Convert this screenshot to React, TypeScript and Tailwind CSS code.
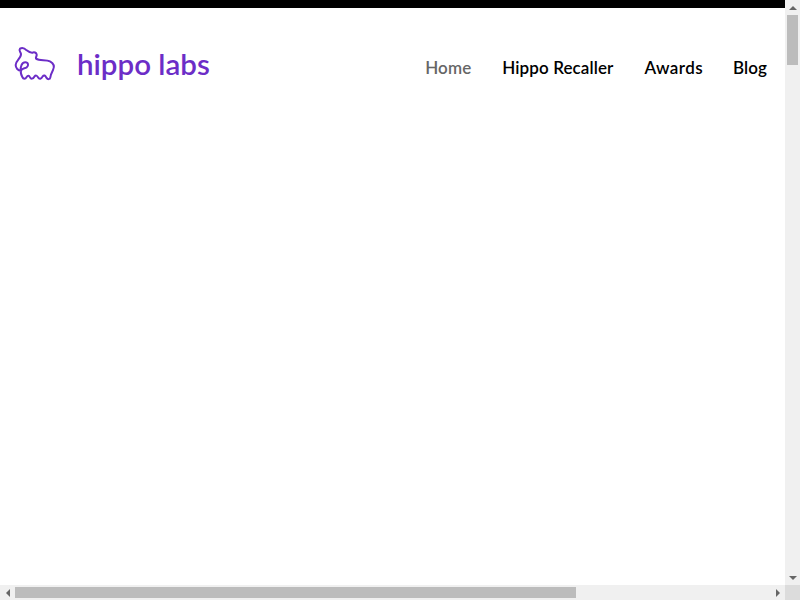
const navItems = ["Home", "Hippo Recaller", "Awards", "Blog"];

const HippoLogo = () => (
  <svg width="50" height="44" viewBox="0 0 150 132" fill="none" stroke="#6c2dc7" strokeWidth="6" strokeLinecap="round" strokeLinejoin="round">
    <path d="M30 20C37 16 45 20 50 25C55 29 61 33 68 32C72 29 79 32 80 37C81 43 76 46 78 50C90 58 108 51 120 58C131 64 134 74 129 84C125 92 122 98 121 106C120 113 113 113 109 107C106 100 102 98 98 103C94 111 88 113 84 106C81 100 77 99 73 104C69 111 63 112 60 106C57 100 53 100 50 105C46 112 40 112 37 105C33 98 31 92 33 86C36 78 44 80 50 76C57 71 55 61 46 61C36 61 30 74 33 86C24 86 17 78 17 69C17 56 34 48 33 36C32 30 25 26 30 20Z" />
  </svg>
);

export default function App() {
  return (
    <div className="w-[800px] h-[600px] flex flex-col overflow-hidden bg-white">
      <div className="flex flex-1 min-h-0">
        <div className="flex-1 flex flex-col">
          <div className="h-2 bg-black" />
          <header className="flex items-center justify-between pl-[10px] pr-[18px] pt-[34px]">
            <div className="flex items-center gap-[17px]">
              <HippoLogo />
              <span className="font-['Lato',sans-serif] text-[29.5px] font-semibold leading-none text-[#6c2dc7]">hippo labs</span>
            </div>
            <nav className="flex gap-[31px] pt-2 font-['Lato',sans-serif] text-[17px] font-semibold tracking-[0.1px]">
              {navItems.map((item) => (
                <a
                  key={item}
                  className={
                    item === "Home" ? "text-[#666666]" : item === "Awards" ? "text-black tracking-[0.4px] mr-[-1px]" : "text-black"
                  }
                >
                  {item}
                </a>
              ))}
            </nav>
          </header>
        </div>

        {/* scrollbar vertical */}
        <div className="w-[15px] bg-[#f0f0f0] flex flex-col items-center">
          <div className="h-[15px] flex items-center justify-center">
            <div className="w-0 h-0 border-x-[4px] border-x-transparent border-b-[4px] border-b-[#666666]" />
          </div>
          <div className="w-[11px] h-[50px] bg-[#bcbcbc]" />
          <div className="flex-1" />
          <div className="h-[15px] flex items-center justify-center">
            <div className="w-0 h-0 border-x-[4px] border-x-transparent border-t-[4px] border-t-[#666666]" />
          </div>
        </div>
      </div>

      {/* scrollbar horizontal */}
      <div className="h-[15px] flex bg-[#f0f0f0]">
        <div className="w-[15px] flex items-center justify-center">
          <div className="w-0 h-0 border-y-[4px] border-y-transparent border-r-[4px] border-r-[#666666]" />
        </div>
        <div className="flex-1 flex items-center">
          <div className="w-[561px] h-[11px] bg-[#bcbcbc]" />
        </div>
        <div className="w-[15px] flex items-center justify-center">
          <div className="w-0 h-0 border-y-[4px] border-y-transparent border-l-[4px] border-l-[#666666]" />
        </div>
        <div className="w-[15px] bg-[#dcdcdc]" />
      </div>
    </div>
  );
}
